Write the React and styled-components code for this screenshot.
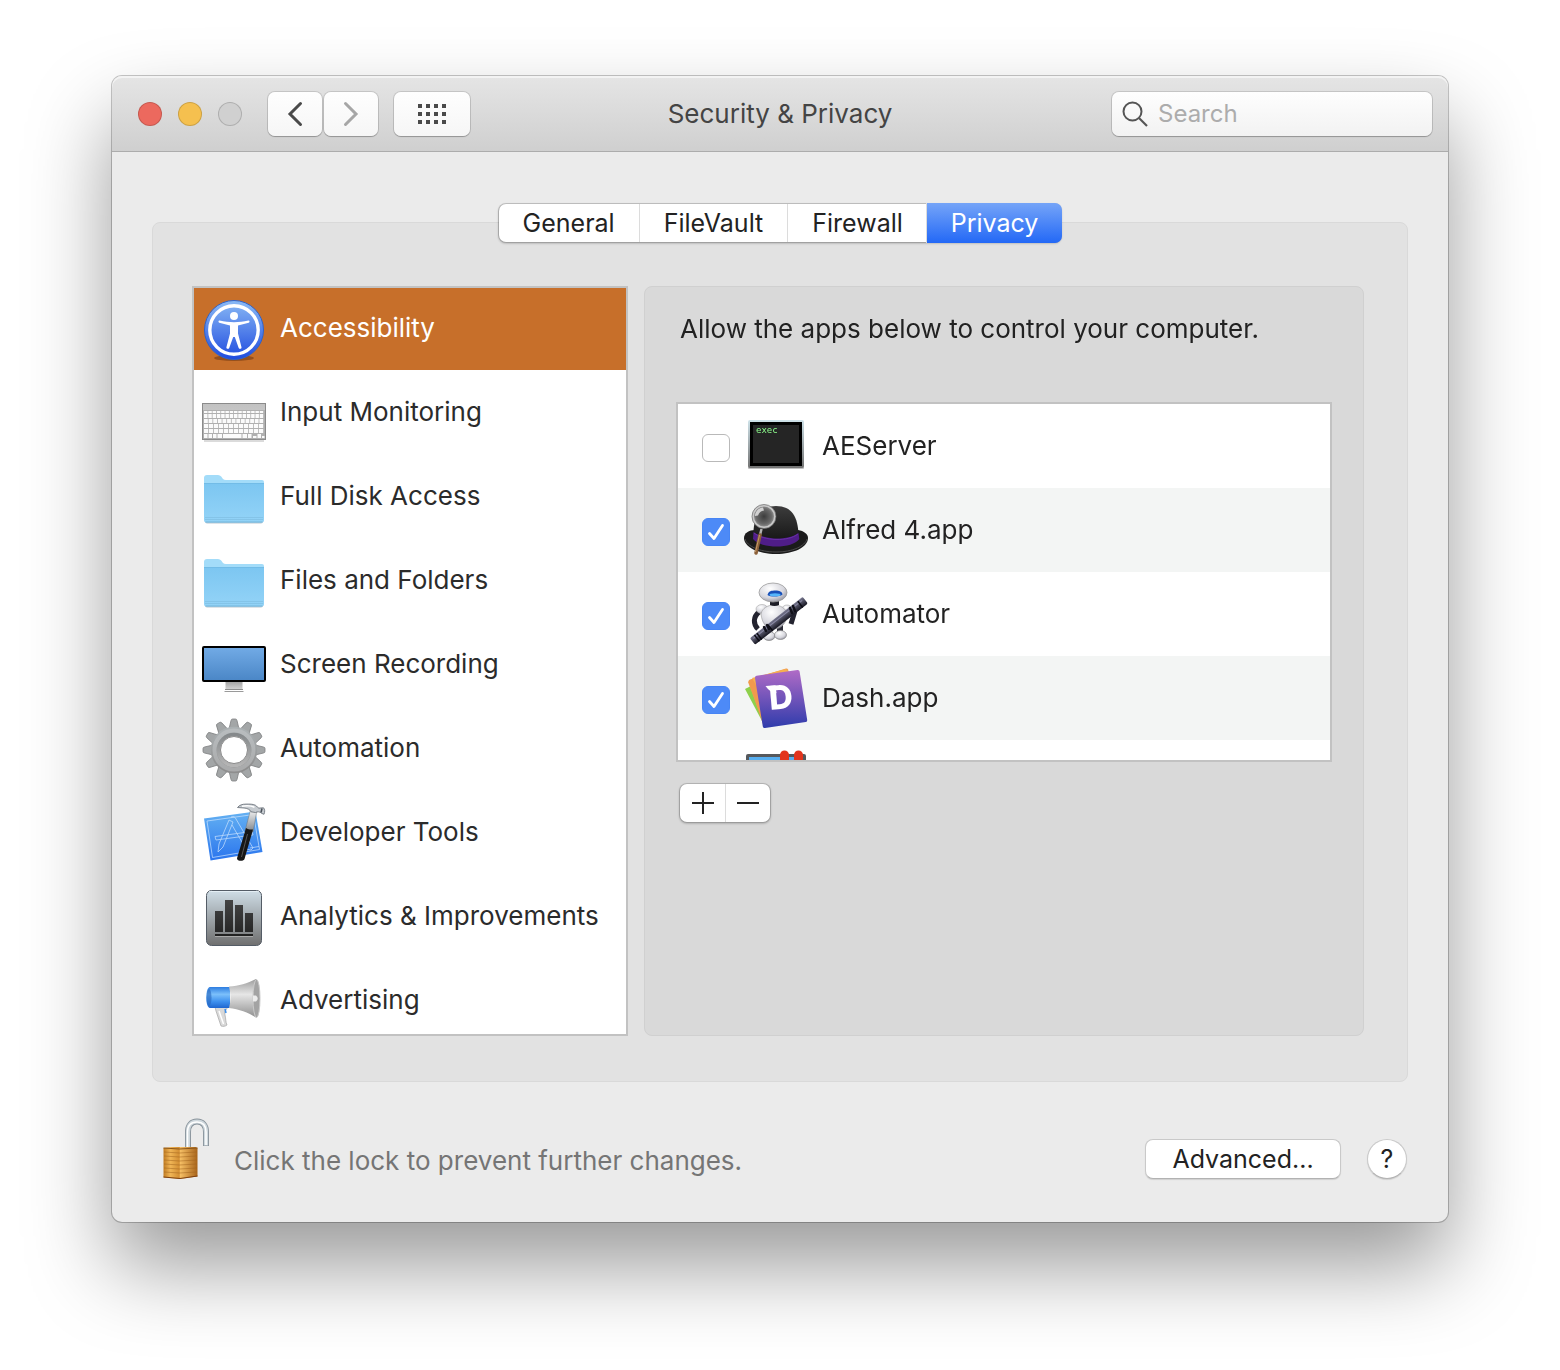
import React, { useState } from "react"
import styled, { createGlobalStyle, css } from "styled-components"

const GlobalStyle = createGlobalStyle`
  * {
    box-sizing: border-box;
  }

  body {
    margin: 0;
    background: #fff;
    color: #222;
    font-family: Inter, "Liberation Sans", sans-serif;
    font-size: 26px;
    line-height: 32px;
  }

  button,
  input {
    margin: 0;
    padding: 0;
    border: 0;
    background: none;
    color: inherit;
    font: inherit;
  }

  svg {
    display: block;
    flex: none;
  }
`

const Desktop = styled.main`
  min-height: 100vh;
  padding: 76px 112px 148px;
  overflow: hidden;
`

const Window = styled.section`
  border-radius: 10px;
  background: #ebebeb;
  box-shadow: 0 0 0 1px rgba(0, 0, 0, 0.22), 0 44px 84px rgba(0, 0, 0, 0.4);
`

const TitleBar = styled.header`
  display: grid;
  grid-template-columns: 1fr auto 1fr;
  align-items: center;
  height: 76px;
  padding: 0 16px;
  border-radius: 10px 10px 0 0;
  background: linear-gradient(#e5e5e5, #cfcfcf);
  box-shadow: inset 0 2px 0 #f3f3f3, inset 0 -1px 0 #acacac;
`

const Title = styled.h1`
  margin: 0;
  color: #444;
  font-size: 26px;
  font-weight: 400;
`

const Controls = styled.div`
  display: flex;
  align-items: center;
  padding-left: 10px;
`

const TrafficLights = styled.div`
  display: flex;
  gap: 16px;
  margin-right: 26px;
`

const Light = styled.button`
  width: 24px;
  height: 24px;
  border: 1px solid rgba(0, 0, 0, 0.16);
  border-radius: 50%;
  background: ${props => props.$color};
`

const ToolButton = styled.button`
  display: grid;
  place-items: center;
  width: ${props => (props.$wide ? 76 : 54)}px;
  height: 44px;
  margin-right: ${props => (props.$wide ? 0 : 2)}px;
  margin-left: ${props => (props.$wide ? 14 : 0)}px;
  border-radius: 7px;
  background: linear-gradient(#fefefe, #f6f6f6);
  box-shadow: 0 0 0 1px rgba(0, 0, 0, 0.12), 0 1px 1px rgba(0, 0, 0, 0.2);
`

const SearchField = styled.label`
  display: flex;
  align-items: center;
  justify-self: end;
  gap: 10px;
  width: 320px;
  height: 44px;
  padding: 0 10px;
  border-radius: 7px;
  background: linear-gradient(#fefefe, #f2f2f2);
  box-shadow: 0 0 0 1px rgba(0, 0, 0, 0.12), 0 1px 1px rgba(0, 0, 0, 0.2);
`

const SearchInput = styled.input`
  flex: 1;
  min-width: 0;
  outline: none;
  font-size: 24px;

  &::placeholder {
    color: #acacac;
    opacity: 1;
  }
`

const Content = styled.div`
  padding: 52px 40px 43px;
`

const Tabs = styled.div`
  position: relative;
  display: flex;
  width: fit-content;
  margin: 0 auto;
  border-radius: 7px;
  background: #fff;
  box-shadow: 0 0 0 1px rgba(0, 0, 0, 0.16), 0 1px 2px 1px rgba(0, 0, 0, 0.16);
`

const Tab = styled.button`
  height: 38px;
  padding: 0 24px;
  font-size: 25px;

  & + & {
    border-left: 1px solid #dcdcdc;
  }

  ${props =>
    props.$active &&
    css`
      border-color: transparent;
      margin: -1px;
      height: 40px;
      background: linear-gradient(#75a4f8, #2368f6);
      color: #fff;
    `}

  &:first-child {
    border-radius: 7px 0 0 7px;
  }

  &:last-child {
    border-radius: 0 7px 7px 0;
  }
`

const Panel = styled.div`
  display: grid;
  grid-template-columns: 436px 1fr;
  gap: 16px;
  margin-top: -20px;
  padding: 63px 43px 45px 39px;
  border: 1px solid #d9d9d9;
  border-radius: 8px;
  background: #e2e2e2;
`

const scrollBox = css`
  overflow: auto;
  scrollbar-width: none;
  border: 2px solid #c2c2c2;
  background: #fff;
`

const Sidebar = styled.nav`
  ${scrollBox}
  height: 750px;
`

const List = styled.ul`
  margin: ${props => (props.$tucked ? "-2px 0 0" : 0)};
  padding: 0;
  list-style: none;
`

const Category = styled.button`
  display: flex;
  align-items: center;
  gap: 14px;
  width: 100%;
  height: 84px;
  padding: 0 8px;
  text-align: left;
  background: ${props => (props.$active ? "#c76f2a" : "transparent")};
  color: ${props => (props.$active ? "#fff" : "#2b2b2b")};
`

const Detail = styled.section`
  padding: 26px 31px;
  border: 1px solid #d0d0d0;
  border-radius: 8px;
  background: #d9d9d9;
`

const Hint = styled.p`
  margin: 0 4px 57px;
`

const AppList = styled.div`
  ${scrollBox}
  height: 360px;
`

const AppRow = styled.li`
  display: flex;
  align-items: center;
  height: 84px;
  padding: 0 24px;

  &:nth-child(even) {
    background: #f3f5f4;
  }
`

const AppLabel = styled.label`
  display: flex;
  flex: 1;
  align-items: center;
  gap: 14px;
`

const Tick = styled.span`
  display: grid;
  padding-top: 4px;

  > * {
    grid-area: 1 / 1;
  }

  svg {
    visibility: hidden;
    pointer-events: none;
  }

  input:checked + svg {
    visibility: visible;
  }
`

const CheckBox = styled.input`
  appearance: none;
  width: 28px;
  height: 28px;
  border: 1px solid #b9b9b9;
  border-radius: 6px;
  background: #fff;

  &:checked {
    border-color: #4785f4;
    background: #4d8af7;
  }
`

const ListButtons = styled.div`
  display: flex;
  width: fit-content;
  margin: 22px 4px 0;
  border-radius: 7px;
  background: #fff;
  box-shadow: 0 0 0 1px rgba(0, 0, 0, 0.14), 0 1px 2px 1px rgba(0, 0, 0, 0.18);
`

const ListButton = styled.button`
  display: grid;
  place-items: center;
  width: 45px;
  height: 38px;

  & + & {
    border-left: 1px solid #dcdcdc;
  }
`

const Footer = styled.footer`
  display: flex;
  align-items: flex-end;
  gap: 26px;
  margin-top: 33px;
  padding: 0 1px 0 10px;
`

const LockButton = styled.button`
  margin-right: -2px;
`

const LockText = styled.p`
  flex: 1;
  margin: 0;
  color: #757575;
  line-height: 36px;
`

const PushButton = styled.button`
  width: ${props => (props.$round ? 40 : 196)}px;
  height: 40px;
  border: 1px solid #c9c9c9;
  border-bottom-color: #b2b2b2;
  border-radius: ${props => (props.$round ? 20 : 8)}px;
  background: #fff;
  box-shadow: 0 1px 1px rgba(0, 0, 0, 0.12);
  font-size: 25px;
`

const Gradient = ({ id, from, to }) => (
  <linearGradient id={id} x1="0" y1="0" x2="0" y2="1">
    <stop stopColor={from} />
    <stop offset="1" stopColor={to} />
  </linearGradient>
)

const RowSvg = props => (
  <svg width="64" height="68" viewBox="0 0 64 68" fill="none" aria-hidden="true" {...props} />
)

const AppSvg = props => (
  <svg width="64" height="64" viewBox="0 0 64 64" fill="none" aria-hidden="true" {...props} />
)

const AccessibilityIcon = () => (
  <RowSvg>
    <Gradient id="acc" from="#8abaf5" to="#1f4bdf" />
    <ellipse cx="32" cy="64" rx="20" ry="3" fill="#6b3510" opacity="0.55" />
    <circle cx="32" cy="36" r="29.5" fill="url(#acc)" stroke="#2f62c8" />
    <circle cx="32" cy="36" r="24.200" stroke="#fff" strokeWidth="3.400" />
    <circle cx="32" cy="22" r="4" fill="#fff" />
    <path
      d="M17.600 26.600c5 1 9.400 1.600 14.400 1.600s9.400-.6 14.400-1.600c1.300-.2 1.600 1.800.3 2.200L36 31.500v8l3.500 13.800c.3 1.600-2.200 2.200-2.800.7L32.800 43h-1.600l-4 11c-.6 1.500-3.100.9-2.800-.7L28 39.500v-8l-10.700-2.700c-1.300-.4-1-2.400.3-2.200z"
      fill="#fff"
    />
  </RowSvg>
)

// y, key height and number of keys for the evenly spaced rows
const keyRows = [
  { y: 33, h: 2, n: 14 },
  { y: 36, h: 4, n: 14 },
  { y: 41, h: 4, n: 13 },
  { y: 46, h: 4, n: 12 },
  { y: 51, h: 4, n: 12 },
]

const KeyboardIcon = () => (
  <RowSvg>
    <Gradient id="kbd" from="#c2c2c2" to="#d6d6d6" />
    <rect x="2" y="61" width="60" height="3" fill="#000" opacity="0.14" />
    <rect x="0.500" y="25.500" width="63" height="36" fill="url(#kbd)" stroke="#8b8b8b" />
    <rect x="1" y="32" width="62" height="29" fill="#b0b0b0" />
    {keyRows.map(({ y, h, n }, row) =>
      Array.from({ length: n }, (_, i) => (
        <rect key={`${row}-${i}`} x={2 + (i * 60) / n} y={y} width={60 / n - 0.8} height={h} fill="#fbfbfb" />
      ))
    )}
    <path d="M2 56h3.500v4H2zm4.500 0H10v4H6.500zM11 56h3.500v4H11zm4.500 0H20v4h-4.500zM21 56h18.500v4H21zm19.500 0H45v4h-4.500zm5.500 0h3.500v4H46z" fill="#fbfbfb" />
    <path d="M51 58h3.500v2H51zm4.500-2H59v4h-3.500zm4.500 2h2.500v2H60z" fill="#fbfbfb" />
  </RowSvg>
)

const FolderIcon = () => (
  <RowSvg>
    <Gradient id="fold" from="#7cc6f1" to="#93d3f7" />
    <rect x="3" y="57" width="58" height="4.500" rx="2" fill="#55758a" opacity="0.4" />
    <path d="M2 25V16q0-3 3-3h11q2 0 3.200 1.500L21 17q1 1 3 1h36q2 0 2 2v5z" fill="#a3dcf9" />
    <path d="M2 21h60v37q0 2.500-2.500 2.500h-55Q2 60.500 2 58z" fill="url(#fold)" />
    <path d="M2 21.500h60" stroke="#72bce7" />
    <path d="M3 55.500h58M3 57.500h58" stroke="#84c4e8" />
    <path d="M3.500 60h57" stroke="#73b4d9" />
  </RowSvg>
)

const ScreenIcon = () => (
  <RowSvg>
    <Gradient id="scr" from="#72abe6" to="#4a86c6" />
    <Gradient id="stand" from="#a5a5a5" to="#d7d7d7" />
    <path d="M23.500 52h17v8h-17z" fill="url(#stand)" />
    <path d="M22.500 61.500h19" stroke="#9a9a9a" />
    <path d="M23 59.500h18" stroke="#8c8c8c" />
    <rect x="1" y="17" width="62" height="34" rx="1" fill="url(#scr)" stroke="#000" strokeWidth="2" />
  </RowSvg>
)

const GearIcon = () => (
  <RowSvg>
    <Gradient id="gear" from="#aab0b2" to="#8e8e8e" />
    <Gradient id="gearRing" from="#85898b" to="#b5b5b5" />
    <g fill="#a3a6a7" stroke="#7d7f80" strokeWidth="0.800">
      {Array.from({ length: 12 }, (_, i) => (
        <path
          key={i}
          d="M27 15 29 6.500q.3-1.500 1.500-1.500h3q1.200 0 1.500 1.500L37 15z"
          transform={`rotate(${i * 30} 32 36)`}
        />
      ))}
    </g>
    <circle cx="32" cy="36" r="18.500" stroke="url(#gear)" strokeWidth="9.500" />
    <circle cx="32" cy="36" r="19.500" stroke="#c6c8c9" strokeWidth="4" opacity="0.5" />
    <circle cx="32" cy="36" r="15.500" stroke="url(#gearRing)" strokeWidth="3.500" />
    <circle cx="32" cy="36" r="13.500" stroke="#8a8a8a" />
  </RowSvg>
)

const DeveloperIcon = () => (
  <RowSvg>
    <Gradient id="blue" from="#64b1f2" to="#2a75ee" />
    <Gradient id="steel" from="#f2f2f2" to="#7f858b" />
    <path d="M2 20.500 53.500 13.500 60.500 54 8.500 62.500z" fill="url(#blue)" />
    <g stroke="#cfe6ff" strokeWidth="0.800" opacity="0.85">
      <path d="M5 23 51.500 16.500 57.500 51.500 10.500 59.500z" />
      <path d="M27 22 17 46l-1 8 5-5 10-25zM29 19c3-1 4 0 5 2l17 29-2 2M30 27l14 24 5 1" />
      <path d="M13 38.500 50 33.500 51 37 14 42zM48 50l9-1.500" />
    </g>
    <path d="M43 33 48.500 12H55L51 34z" fill="url(#steel)" stroke="#6d747b" strokeWidth="0.500" />
    <path d="M44 30c2 1.500 4.500 1.700 7 1.500l-8.500 29.500c-.7 2.800-8 2.200-7.500-.8z" fill="#171717" />
    <path d="M45.500 36 39.500 59" stroke="#555" />
    <path
      d="M35.500 9.500c1.800-2.500 5-3.400 8.500-3.400 4 0 6.500-.2 9.500 1.200 1.500.8 2 2.700 3.500 2.800l4.500-.3c1.500 1.500 1.500 4 .5 6.500l-2.500-1c-1.500-1.800-4-1.800-6-.8L49 13.800c-1-2.500-4-3.500-7-3.800z"
      fill="#c6cbd0"
      stroke="#626a72"
      strokeWidth="0.800"
    />
    <path d="M40 8.200c5-.8 9-.6 12.500 1" stroke="#fff" strokeWidth="1.500" />
    <path d="m60 10.500-1 4" stroke="#4a525a" strokeWidth="1.500" />
  </RowSvg>
)

const AnalyticsIcon = () => (
  <RowSvg>
    <Gradient id="ana" from="#cfdde6" to="#6f6f6f" />
    <Gradient id="anaBar" from="#444" to="#272727" />
    <rect x="4.500" y="8.500" width="55" height="55" rx="5" fill="url(#ana)" stroke="#545c66" />
    <path d="M7 9.500h50" stroke="#eef6fb" opacity="0.7" />
    <path d="M13 29h8v21h-8zM23 18h8v32h-8zM33 23h8v27h-8zM43 31h8v19h-8z" fill="url(#anaBar)" />
    <path d="M13 53h38" stroke="#222" strokeWidth="2" />
    <path d="M13 54.500h38" stroke="#a9a9a9" />
  </RowSvg>
)

const MegaphoneIcon = () => (
  <RowSvg>
    <linearGradient id="mega" x1="0" y1="0" x2="0" y2="1">
      <stop stopColor="#2d7de0" />
      <stop offset="0.35" stopColor="#7cc0fb" />
      <stop offset="0.7" stopColor="#3d90ee" />
      <stop offset="1" stopColor="#1f66cf" />
    </linearGradient>
    <linearGradient id="horn" x1="0" y1="0" x2="0" y2="1">
      <stop stopColor="#9c9c9c" />
      <stop offset="0.4" stopColor="#e6e6e6" />
      <stop offset="1" stopColor="#8f8f8f" />
    </linearGradient>
    <path d="M13 41h13l-3.500 5 .5 3c1 4 .5 7 2 10-2 1.500-4 1.700-6 1L14 45z" fill="#d9d9d9" stroke="#a5a5a5" strokeWidth="0.700" />
    <path d="m17 45 4.500 13" stroke="#fff" strokeWidth="1.500" />
    <path d="m23 43 1 4" stroke="#3b8eea" strokeWidth="1.500" />
    <path d="M8 21h20v21H8c-5 0-5-21 0-21z" fill="url(#mega)" />
    <ellipse cx="7" cy="31.500" rx="2.500" ry="8.500" fill="#2766bd" opacity="0.6" />
    <path d="M27 20.500c10-.5 18-3 27-7.500v38.500c-8-5-17-8.500-27-9.500 2-7 2-14 0-21.500z" fill="url(#horn)" />
    <ellipse cx="54.500" cy="32.500" rx="3.500" ry="19" fill="#a3a3a3" stroke="#c9c9c9" />
    <path d="M51 29.500h3q3.500 3 0 6h-3z" fill="#ececec" />
  </RowSvg>
)

const ExecIcon = () => (
  <AppSvg>
    <Gradient id="exec" from="#cfe3ea" to="#737373" />
    <rect x="4" y="52" width="56" height="3" rx="1" fill="#000" opacity="0.25" />
    <rect x="4" y="6" width="56" height="48" rx="2" fill="url(#exec)" />
    <path d="M6 8h52v44H6z" fill="#000" />
    <path d="M9 11h46v38H9z" fill="#252525" />
    <text x="12" y="19" fill="#8dff8d" fontFamily="DejaVu Sans Mono, monospace" fontSize="9">
      exec
    </text>
  </AppSvg>
)

const HatIcon = () => (
  <AppSvg>
    <Gradient id="hat" from="#3c3c3c" to="#161616" />
    <radialGradient id="lens">
      <stop stopColor="#3c3c3c" />
      <stop offset="0.7" stopColor="#6a6a6a" />
      <stop offset="1" stopColor="#9a9a9a" />
    </radialGradient>
    <path d="M0 40c0-5 5-8 11-8l43 0c6 1 10 4 10 8 0 9-14 16-32 16S0 49 0 40z" fill="#1b1b1b" />
    <path d="M1 41c2 7 14 13 31 13s29-6 31-13" stroke="#4b4b4b" />
    <path d="M9.500 37C9 20 16 8 32 8s22 11 22.500 29c-6 8-39 8-45 0z" fill="url(#hat)" />
    <path d="M9.500 34c10 8 34 9 45 1l.8 6c-7 10-38 10-46.300 0z" fill="#4f1d88" />
    <path d="M10 35c10 8 34 9 44 1" stroke="#7436b3" opacity="0.7" />
    <circle cx="20" cy="18.500" r="11" fill="url(#lens)" stroke="#c9c9c9" strokeWidth="2" />
    <circle cx="20" cy="18.500" r="12" stroke="#666" strokeWidth="0.700" />
    <path d="M11 18c0-4 3-8 8-8.500l1 3c-3 .5-5 2-6 5z" fill="#e3e3e3" opacity="0.85" />
    <path d="m17.500 31-1.500 6" stroke="#b4b4b4" strokeWidth="2.500" />
    <path d="m16 37-4 18" stroke="#8b6038" strokeWidth="3.500" strokeLinecap="round" />
    <path d="m15.500 37-4 17" stroke="#c49a68" />
  </AppSvg>
)

const RobotIcon = () => (
  <AppSvg>
    <radialGradient id="bot" cx="0.4" cy="0.3" r="0.8">
      <stop stopColor="#fff" />
      <stop offset="0.6" stopColor="#d6d6dd" />
      <stop offset="1" stopColor="#858591" />
    </radialGradient>
    <Gradient id="tube" from="#77778f" to="#171722" />
    <path d="M15 30c-6 5-6 12-1 17" stroke="#23232f" strokeWidth="5" />
    <path d="m42 31 8 1-3 10" stroke="#23232f" strokeWidth="5" />
    <path d="M24 45v8M36 43v9" stroke="#2c2c38" strokeWidth="6" />
    <ellipse cx="25" cy="54" rx="6" ry="4.500" fill="url(#bot)" stroke="#777" strokeWidth="0.600" />
    <ellipse cx="36.500" cy="53" rx="6" ry="4.500" fill="url(#bot)" stroke="#777" strokeWidth="0.600" />
    <ellipse cx="18" cy="27" rx="6" ry="4.500" fill="url(#bot)" stroke="#aaa" strokeWidth="0.600" />
    <ellipse cx="43" cy="27" rx="5" ry="4" fill="url(#bot)" stroke="#aaa" strokeWidth="0.600" />
    <path d="M17 32c1-6 7-9 13-9s12 3 13 9c0 8-5 15-13 15s-12-6-13-15z" fill="url(#bot)" stroke="#999" strokeWidth="0.600" />
    <path d="M26 19h9v4q-4.500 2-9 0z" fill="#1c1c26" />
    <ellipse cx="29" cy="10.500" rx="14" ry="9.500" fill="url(#bot)" stroke="#9b9b9b" strokeWidth="0.800" />
    <path d="M23.500 13c1-4 4-4.500 8-4.500s6.500 1 7 4c-3 2.500-12 2.700-15 .5z" fill="#174fb8" />
    <ellipse cx="31" cy="12.700" rx="5.500" ry="1.500" fill="#54b5fb" />
    <g transform="rotate(-38 35 39)">
      <rect x="1.500" y="34.500" width="67" height="8.500" rx="1.500" fill="url(#tube)" />
      <path d="M4 37h62" stroke="#8a8aa5" />
      <path d="M7 35v8M10 35v8M24 35v8M62 35v8" stroke="#0c0c14" strokeWidth="1.500" />
    </g>
    <path d="m46 26 2 5m1-7 2 5m-31 16 2 4m1-6 2 4" stroke="#111119" strokeWidth="2.500" strokeLinecap="round" />
  </AppSvg>
)

const DashIcon = () => (
  <AppSvg>
    <Gradient id="dash" from="#b06bc6" to="#2f3cac" />
    <path d="m1 23 6-3 14 33-3 2z" fill="#8ed04b" />
    <path d="m4 16 4-2 13 41-3-2z" fill="#f3a152" />
    <path d="M4.500 15.500q0-1.500 1.500-2L42 2.500q1.500-.3 2 1L58 50 19 58z" fill="#f19a4d" />
    <path d="m8 12 34-9 4 4-34 12z" fill="#f7b04f" />
    <path d="M12.500 9.800 53.500 4q1.800-.2 2.100 1.500l7.600 48.500q.3 1.800-1.500 2.100L21 61.900q-1.800.2-2.200-1.500L11 12q-.3-1.900 1.500-2.200z" fill="url(#dash)" />
    <text
      x="37"
      y="43"
      fill="#fff"
      fontFamily="Inter, sans-serif"
      fontSize="33"
      fontWeight="800"
      textAnchor="middle"
      transform="rotate(-5 36 32)"
    >
      D
    </text>
    <path d="m21.500 20 10-.800 1 8c-4-.2-8-2.700-11-7.200z" fill="#fff" />
  </AppSvg>
)

const WindowIcon = () => (
  <AppSvg>
    <rect x="2" y="4" width="60" height="52" rx="2" fill="#55585c" />
    <path d="M5 7h54v46H5z" fill="#56aef0" />
    <circle cx="40.500" cy="5" r="4.500" fill="#e2341d" />
    <circle cx="54.500" cy="5" r="4.500" fill="#e2341d" />
    <path d="M36 5h9v14h-9zM50 5h9v14h-9z" fill="#e2341d" />
  </AppSvg>
)

const LockIcon = () => (
  <svg width="48" height="64" viewBox="0 0 48 64" fill="none" aria-hidden="true">
    <linearGradient id="brass" x1="0" y1="0" x2="1" y2="0">
      <stop stopColor="#c17c22" />
      <stop offset="0.2" stopColor="#f0b556" />
      <stop offset="0.46" stopColor="#d38f33" />
      <stop offset="0.5" stopColor="#f4bd63" />
      <stop offset="1" stopColor="#a8641a" />
    </linearGradient>
    <path d="M26 34V17c0-7 3.500-10.500 9-10.500s9 3.500 9 10.500v14" stroke="#87929a" strokeWidth="6" />
    <path d="M26 34V17c0-7 3.500-10.500 9-10.500s9 3.500 9 10.500v13.500" stroke="#cfd8dd" strokeWidth="4.200" />
    <path d="M25.500 34V17c0-7 4-10 9.500-10s9 3 9 10v13" stroke="#fff" strokeWidth="1.500" />
    <path d="m1.500 33 8-1h24l2 1v28.500L18 64 1.500 62.500z" fill="url(#brass)" />
    <path d="m1.500 33 16 1 18-1" stroke="#8c5619" />
    <path
      d="m2 37 15.500 1L35 37M2 41l15.500 1L35 41M2 45l15.500 1L35 45M2 49l15.500 1L35 49M2 53l15.500 1L35 53M2 57l15.500 1L35 57"
      stroke="#9f621b"
      opacity="0.5"
    />
    <path d="M1.500 62 18 63.500 35.500 61" stroke="#7c3f10" />
  </svg>
)

const tabs = ["General", "FileVault", "Firewall", "Privacy"]

const categories = [
  { name: "Accessibility", Icon: AccessibilityIcon },
  { name: "Input Monitoring", Icon: KeyboardIcon },
  { name: "Full Disk Access", Icon: FolderIcon },
  { name: "Files and Folders", Icon: FolderIcon },
  { name: "Screen Recording", Icon: ScreenIcon },
  { name: "Automation", Icon: GearIcon },
  { name: "Developer Tools", Icon: DeveloperIcon },
  { name: "Analytics & Improvements", Icon: AnalyticsIcon },
  { name: "Advertising", Icon: MegaphoneIcon },
]

const apps = [
  { name: "AEServer", Icon: ExecIcon, allowed: false },
  { name: "Alfred 4.app", Icon: HatIcon, allowed: true },
  { name: "Automator", Icon: RobotIcon, allowed: true },
  { name: "Dash.app", Icon: DashIcon, allowed: true },
  { name: "", Icon: WindowIcon, allowed: false },
]

const AppItem = ({ name, Icon, allowed }) => (
  <AppRow>
    <AppLabel>
      <Tick>
        <CheckBox type="checkbox" defaultChecked={allowed} />
        <svg width="28" height="28" viewBox="0 0 28 28" fill="none" aria-hidden="true">
          <path d="m7.500 15.500 4.500 5 8.500-13" stroke="#fff" strokeWidth="2.800" strokeLinecap="round" strokeLinejoin="round" />
        </svg>
      </Tick>
      <Icon />
      <span>{name}</span>
    </AppLabel>
  </AppRow>
)

const App = () => {
  const [tab, setTab] = useState("Privacy")
  const [category, setCategory] = useState("Accessibility")

  return (
    <Desktop>
      <GlobalStyle />
      <Window>
        <TitleBar>
          <Controls>
            <TrafficLights>
              <Light $color="#ec695e" aria-label="Close" />
              <Light $color="#f5c04f" aria-label="Minimize" />
              <Light $color="#d0d0d0" aria-label="Zoom" disabled />
            </TrafficLights>
            <ToolButton aria-label="Back">
              <svg width="16" height="26" viewBox="0 0 16 26" fill="none">
                <path d="M13.500 2.500 3 13l10.500 10.500" stroke="#4a4a4a" strokeWidth="3" strokeLinecap="round" />
              </svg>
            </ToolButton>
            <ToolButton aria-label="Forward">
              <svg width="16" height="26" viewBox="0 0 16 26" fill="none">
                <path d="M2.500 2.500 13 13 2.500 23.500" stroke="#a6a6a6" strokeWidth="3" strokeLinecap="round" />
              </svg>
            </ToolButton>
            <ToolButton $wide aria-label="Show All">
              <svg width="28" height="20" viewBox="0 0 28 20">
                {[0, 8, 16].map(y =>
                  [0, 8, 16, 24].map(x => (
                    <rect key={`${x}-${y}`} x={x} y={y} width="4" height="4" fill="#4a4a4a" />
                  ))
                )}
              </svg>
            </ToolButton>
          </Controls>
          <Title>Security &amp; Privacy</Title>
          <SearchField>
            <svg width="26" height="26" viewBox="0 0 26 26" fill="none" aria-hidden="true">
              <circle cx="10.500" cy="10.500" r="9" stroke="#555" strokeWidth="2" />
              <path d="m17 17 8 8" stroke="#555" strokeWidth="2.200" />
            </svg>
            <SearchInput type="search" placeholder="Search" aria-label="Search" />
          </SearchField>
        </TitleBar>

        <Content>
          <Tabs role="tablist">
            {tabs.map(name => (
              <Tab key={name} role="tab" aria-selected={tab === name} $active={tab === name} onClick={() => setTab(name)}>
                {name}
              </Tab>
            ))}
          </Tabs>

          <Panel>
            <Sidebar>
              <List $tucked>
                {categories.map(({ name, Icon }) => (
                  <li key={name}>
                    <Category $active={category === name} onClick={() => setCategory(name)}>
                      <Icon />
                      {name}
                    </Category>
                  </li>
                ))}
              </List>
            </Sidebar>

            <Detail>
              <Hint>Allow the apps below to control your computer.</Hint>
              <AppList>
                <List>
                  {apps.map((app, i) => (
                    <AppItem key={i} {...app} />
                  ))}
                </List>
              </AppList>
              <ListButtons>
                <ListButton aria-label="Add">
                  <svg width="22" height="22" viewBox="0 0 22 22">
                    <path d="M0 11h22M11 0v22" stroke="#222" strokeWidth="2" />
                  </svg>
                </ListButton>
                <ListButton aria-label="Remove">
                  <svg width="22" height="22" viewBox="0 0 22 22">
                    <path d="M0 11h22" stroke="#222" strokeWidth="2" />
                  </svg>
                </ListButton>
              </ListButtons>
            </Detail>
          </Panel>

          <Footer>
            <LockButton aria-label="Lock">
              <LockIcon />
            </LockButton>
            <LockText>Click the lock to prevent further changes.</LockText>
            <PushButton>Advanced...</PushButton>
            <PushButton $round aria-label="Help">
              ?
            </PushButton>
          </Footer>
        </Content>
      </Window>
    </Desktop>
  )
}

export default App
